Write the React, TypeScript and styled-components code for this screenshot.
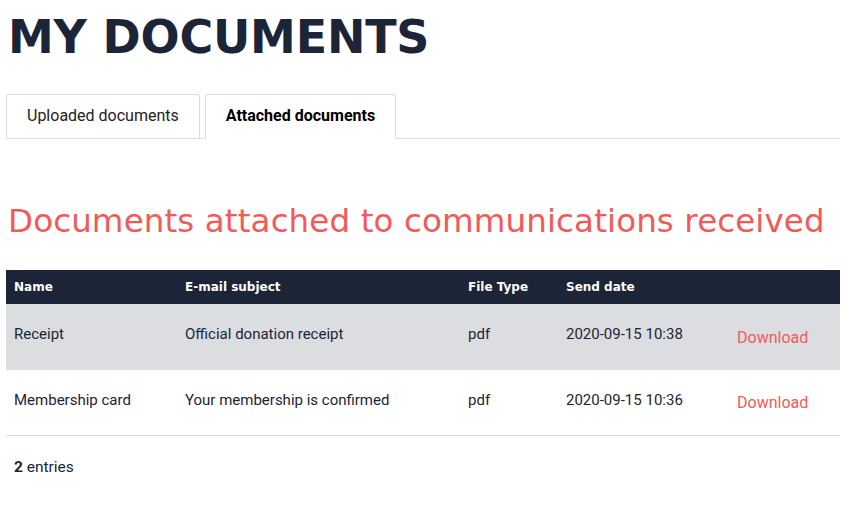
import styled, { createGlobalStyle } from "styled-components";

const GlobalStyle = createGlobalStyle`
  body {
    margin: 0;
    background: #ffffff;
    font-family: Roboto, "Liberation Sans", sans-serif;
    color: #1c2438;
  }
`;

const Page = styled.div`
  padding: 0 20px 0 6px;
  width: 834px;
`;

const Title = styled.h1`
  margin: 0;
  padding: 10px 0 0 2px;
  font-family: "DejaVu Sans", sans-serif;
  font-weight: 700;
  font-size: 46px;
  line-height: 54px;
  letter-spacing: -0.2px;
  color: #1c2438;
`;

const TabBar = styled.div`
  display: flex;
  gap: 5px;
  margin-top: 30px;
  border-bottom: 1px solid #dddddd;
  height: 44px;
`;

interface TabProps {
  $active?: boolean;
}

const Tab = styled.div<TabProps>`
  box-sizing: border-box;
  height: ${(p) => (p.$active ? "45px" : "44px")};
  padding: 0 20px 2px;
  display: flex;
  align-items: center;
  font-size: 16px;
  font-weight: ${(p) => (p.$active ? 700 : 400)};
  color: ${(p) => (p.$active ? "#000000" : "#222222")};
  background: #ffffff;
  border: 1px solid #dddddd;
  border-bottom: ${(p) => (p.$active ? "1px solid #ffffff" : "none")};
  border-radius: 3px 3px 0 0;
`;

const Subtitle = styled.h2`
  margin: 62px 0 0 2px;
  font-family: "DejaVu Sans", sans-serif;
  font-weight: 400;
  font-size: 32.5px;
  line-height: 40px;
  letter-spacing: 0.12px;
  color: #f25a5a;
`;

const Table = styled.table`
  margin-top: 29px;
  width: 834px;
  border-collapse: collapse;
`;

const HeadCell = styled.th`
  text-align: left;
  height: 34px;
  padding: 0 8px;
  background: #1c2438;
  color: #ffffff;
  font-family: "DejaVu Sans", sans-serif;
  font-weight: 700;
  font-size: 12px;
`;

interface RowProps {
  $shaded?: boolean;
}

const Row = styled.tr<RowProps>`
  background: ${(p) => (p.$shaded ? "#dcdde1" : "#ffffff")};
  border-bottom: ${(p) => (p.$shaded ? "none" : "1px solid #dddddd")};
`;

const Cell = styled.td<RowProps>`
  height: ${(p) => (p.$shaded ? "60px" : "59px")};
  padding: 0 8px 6px;
  font-size: 15px;
  color: #1c2438;
  vertical-align: middle;
`;

const DownloadLink = styled.a`
  display: inline-block;
  padding-top: 6px;
  margin-left: 9px;
  font-size: 16px;
  color: #f25a5a;
  text-decoration: none;
`;

const Footer = styled.div`
  padding: 22px 0 0 8px;
  font-size: 15.5px;
  color: #1c2438;

  b {
    font-weight: 700;
  }
`;

const rows = [
  {
    name: "Receipt",
    subject: "Official donation receipt",
    type: "pdf",
    date: "2020-09-15 10:38",
  },
  {
    name: "Membership card",
    subject: "Your membership is confirmed",
    type: "pdf",
    date: "2020-09-15 10:36",
  },
];

export default function App() {
  return (
    <>
      <GlobalStyle />
      <Page>
        <Title>MY DOCUMENTS</Title>
        <TabBar>
          <Tab>Uploaded documents</Tab>
          <Tab $active>Attached documents</Tab>
        </TabBar>
        <Subtitle>Documents attached to communications received</Subtitle>
        <Table>
          <colgroup>
            <col style={{ width: 171 }} />
            <col style={{ width: 283 }} />
            <col style={{ width: 98 }} />
            <col style={{ width: 162 }} />
            <col />
          </colgroup>
          <thead>
            <tr>
              <HeadCell>Name</HeadCell>
              <HeadCell>E-mail subject</HeadCell>
              <HeadCell>File Type</HeadCell>
              <HeadCell>Send date</HeadCell>
              <HeadCell />
            </tr>
          </thead>
          <tbody>
            {rows.map((r, i) => (
              <Row key={r.name} $shaded={i === 0}>
                <Cell $shaded={i === 0}>{r.name}</Cell>
                <Cell $shaded={i === 0}>{r.subject}</Cell>
                <Cell $shaded={i === 0}>{r.type}</Cell>
                <Cell $shaded={i === 0}>{r.date}</Cell>
                <Cell $shaded={i === 0}>
                  <DownloadLink href="#">Download</DownloadLink>
                </Cell>
              </Row>
            ))}
          </tbody>
        </Table>
        <Footer>
          <b>2</b> entries
        </Footer>
      </Page>
    </>
  );
}
